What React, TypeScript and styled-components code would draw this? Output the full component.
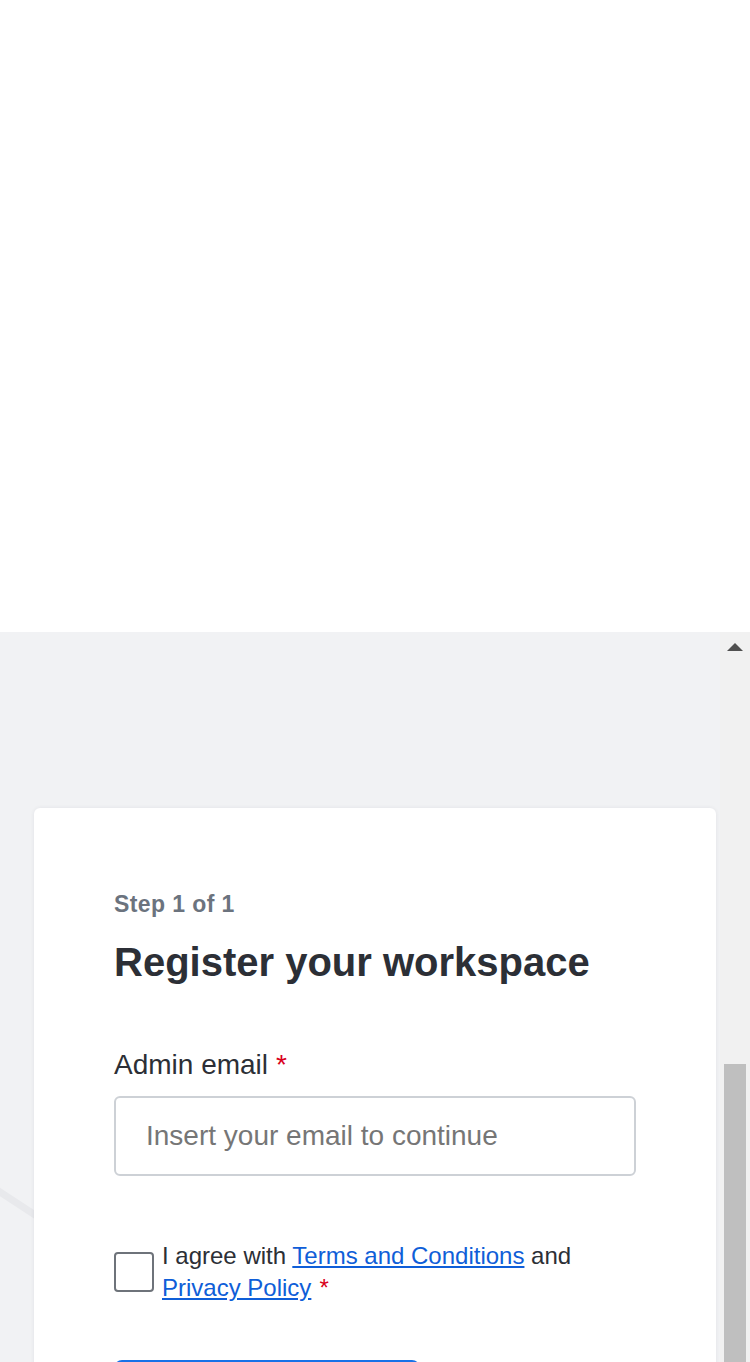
import React from "react";
import styled, { createGlobalStyle } from "styled-components";

const GlobalStyle = createGlobalStyle`
  html, body { margin: 0; padding: 0; background: #ffffff; }
  body { font-family: "Liberation Sans", Arial, sans-serif; }
  * { box-sizing: border-box; }
`;

const Page = styled.div`
  display: flex;
  flex-direction: column;
  width: 750px;
`;

const TopBlank = styled.div`
  height: 632px;
  background: #ffffff;
`;

const Viewport = styled.div`
  display: flex;
  height: 730px;
  overflow: hidden;
  background: #f1f2f4;
`;

const Content = styled.div`
  position: relative;
  flex: 1;
  padding: 176px 0 0 34px;
`;

const Decoration = styled.svg`
  position: absolute;
  left: 0;
  top: 540px;
  width: 60px;
  height: 60px;
  pointer-events: none;
`;

const Card = styled.div`
  position: relative;
  width: 682px;
  background: #ffffff;
  border-radius: 6px;
  padding: 80px;
  box-shadow: 0 0 4px rgba(20, 30, 50, 0.07);
  display: flex;
  flex-direction: column;
`;

const StepLabel = styled.div`
  font-size: 23px;
  line-height: 32px;
  font-weight: 700;
  letter-spacing: 0.4px;
  color: #6b737e;
`;

const Title = styled.h1`
  margin: 18px 0 0;
  font-size: 40px;
  line-height: 48px;
  font-weight: 700;
  color: #2c2f36;
`;

const FieldLabel = styled.label`
  margin-top: 59px;
  font-size: 28px;
  line-height: 40px;
  color: #2c2f36;
`;

const Required = styled.span<{ $gap: number }>`
  color: #d9001b;
  margin-left: ${(p) => p.$gap}px;
`;

const TextInput = styled.input`
  margin-top: 11px;
  width: 522px;
  height: 80px;
  border: 2px solid #cdd1d6;
  border-radius: 6px;
  padding: 0 30px;
  font-family: "Liberation Sans", Arial, sans-serif;
  font-size: 28px;
  color: #2c2f36;
  background: #ffffff;
  outline: none;
  &::placeholder { color: #767676; }
`;

const AgreeRow = styled.div`
  margin-top: 64px;
  display: flex;
  align-items: center;
  gap: 8px;
`;

const CheckBox = styled.input`
  appearance: none;
  -webkit-appearance: none;
  margin: 0;
  flex: 0 0 auto;
  width: 40px;
  height: 40px;
  border: 2px solid #6e737a;
  border-radius: 4px;
  background: #ffffff;
`;

const AgreeText = styled.div`
  font-size: 24px;
  line-height: 32px;
  color: #2c2f36;
`;

const Link = styled.a`
  color: #0f5ed8;
  text-decoration: underline;
  text-underline-offset: 2px;
`;

const SubmitButton = styled.button`
  margin-top: 56px;
  width: 306px;
  height: 80px;
  border: none;
  border-radius: 8px;
  background: #1872e8;
  color: #ffffff;
  font-family: "Liberation Sans", Arial, sans-serif;
  font-size: 28px;
  font-weight: 700;
`;

const Scrollbar = styled.div`
  width: 30px;
  background: #f1f1f1;
  display: flex;
  flex-direction: column;
  align-items: center;
  flex: 0 0 auto;
`;

const ArrowUp = styled.div`
  margin-top: 11px;
  width: 0;
  height: 0;
  border-left: 8px solid transparent;
  border-right: 8px solid transparent;
  border-bottom: 8px solid #505050;
`;

const Thumb = styled.div`
  margin-top: 413px;
  width: 22px;
  flex: 1;
  background: #bfbfbf;
`;

export default function App() {
  return (
    <>
      <GlobalStyle />
      <Page>
        <TopBlank />
        <Viewport>
          <Content>
            <Decoration viewBox="0 0 60 60">
              <line x1="-10" y1="13.4" x2="50" y2="52.8" stroke="#e8e9ec" strokeWidth="7" />
            </Decoration>
            <Card>
              <StepLabel>Step 1 of 1</StepLabel>
              <Title>Register your workspace</Title>
              <FieldLabel htmlFor="admin-email">
                Admin email<Required $gap={8}>*</Required>
              </FieldLabel>
              <TextInput id="admin-email" type="email" placeholder="Insert your email to continue" />
              <AgreeRow>
                <CheckBox type="checkbox" aria-label="agree" />
                <AgreeText>
                  I agree with <Link href="#">Terms and Conditions</Link> and
                  <br />
                  <Link href="#">Privacy Policy</Link>
                  <Required $gap={8}>*</Required>
                </AgreeText>
              </AgreeRow>
              <SubmitButton type="button">Continue</SubmitButton>
            </Card>
          </Content>
          <Scrollbar>
            <ArrowUp />
            <Thumb />
          </Scrollbar>
        </Viewport>
      </Page>
    </>
  );
}
